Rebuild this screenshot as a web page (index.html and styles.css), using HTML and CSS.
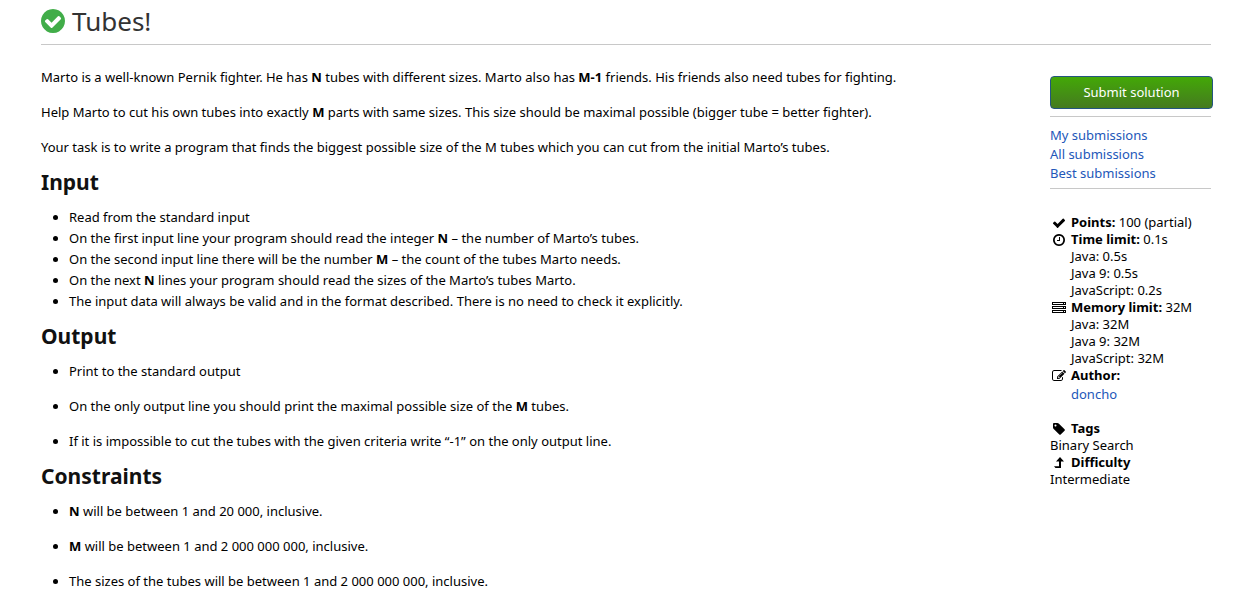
FILE: index.html
```html
<!DOCTYPE html>
<html lang="en">
<head>
<meta charset="utf-8">
<title>Tubes!</title>
<link rel="stylesheet" href="styles.css">
</head>
<body>
<main class="page">
<header class="page-header">
<svg class="status-icon" viewBox="128 128 1536 1536" aria-hidden="true"><path d="M1412 734q0-28-18-46l-91-90q-19-19-45-19t-45 19l-408 407-226-226q-19-19-45-19t-45 19l-91 90q-18 18-18 46 0 27 18 45l362 362q19 19 45 19 27 0 46-19l543-543q18-18 18-45zm252 162q0 209-103 385.5t-279.5 279.5-385.5 103-385.5-103-279.5-279.5-103-385.5 103-385.5 279.5-279.5 385.5-103 385.5 103 279.5 279.5 103 385.5z"/></svg>
<h1 class="page-title">Tubes!</h1>
</header>
<div class="columns">
<article class="problem">
<p>Marto is a well-known Pernik fighter. He has <strong>N</strong> tubes with different sizes. Marto also has <strong>M-1</strong> friends. His friends also need tubes for fighting.</p>
<p>Help Marto to cut his own tubes into exactly <strong>M</strong> parts with same sizes. This size should be maximal possible (bigger tube = better fighter).</p>
<p>Your task is to write a program that finds the biggest possible size of the M tubes which you can cut from the initial Marto’s tubes.</p>
<h2>Input</h2>
<ul>
<li>Read from the standard input</li>
<li>On the first input line your program should read the integer <strong>N</strong> – the number of Marto’s tubes.</li>
<li>On the second input line there will be the number <strong>M</strong> – the count of the tubes Marto needs.</li>
<li>On the next <strong>N</strong> lines your program should read the sizes of the Marto’s tubes Marto.</li>
<li>The input data will always be valid and in the format described. There is no need to check it explicitly.</li>
</ul>
<h2>Output</h2>
<ul class="loose">
<li>Print to the standard output</li>
<li>On the only output line you should print the maximal possible size of the <strong>M</strong> tubes.</li>
<li>If it is impossible to cut the tubes with the given criteria write “-1” on the only output line.</li>
</ul>
<h2>Constraints</h2>
<ul class="loose">
<li><strong>N</strong> will be between 1 and 20 000, inclusive.</li>
<li><strong>M</strong> will be between 1 and 2 000 000 000, inclusive.</li>
<li>The sizes of the tubes will be between 1 and 2 000 000 000, inclusive.</li>
</ul>
</article>
<aside class="sidebar">
<button class="submit" type="button">Submit solution</button>
<nav class="links">
<a href="#my">My submissions</a>
<a href="#all">All submissions</a>
<a href="#best">Best submissions</a>
</nav>
<section class="info">
<div class="row"><svg class="icon" viewBox="0 0 1792 1792" aria-hidden="true"><path d="M1671 566q0 40-28 68l-724 724-136 136q-28 28-68 28t-68-28l-136-136-362-362q-28-28-28-68t28-68l136-136q28-28 68-28t68 28l294 295 656-657q28-28 68-28t68 28l136 136q28 28 28 68z"/></svg><span><strong>Points:</strong> 100 (partial)</span></div>
<div class="row"><svg class="icon" viewBox="0 0 1792 1792" aria-hidden="true"><path d="M1024 544v448q0 14-9 23t-23 9h-320q-14 0-23-9t-9-23v-64q0-14 9-23t23-9h224v-352q0-14 9-23t23-9h64q14 0 23 9t9 23zm416 352q0-148-73-273t-198-198-273-73-273 73-198 198-73 273 73 273 198 198 273 73 273-73 198-198 73-273zm224 0q0 209-103 385.5t-279.5 279.5-385.5 103-385.5-103-279.5-279.5-103-385.5 103-385.5 279.5-279.5 385.5-103 385.5 103 279.5 279.5 103 385.5z"/></svg><span><strong>Time limit:</strong> 0.1s</span></div>
<div class="detail">Java: 0.5s</div>
<div class="detail">Java 9: 0.5s</div>
<div class="detail">JavaScript: 0.2s</div>
<div class="row"><svg class="icon" viewBox="0 0 14 14" aria-hidden="true"><path fill-rule="evenodd" d="M0 1h14v3H0zM1 2v1h10V2zM12 2v1h1V2zM0 5h14v3H0zM1 6v1h10V6zM12 6v1h1V6zM0 9h14v3H0zM1 10v1h10v-1zM12 10v1h1v-1z"/></svg><span><strong>Memory limit:</strong> 32M</span></div>
<div class="detail">Java: 32M</div>
<div class="detail">Java 9: 32M</div>
<div class="detail">JavaScript: 32M</div>
<div class="row"><svg class="icon" viewBox="0 0 1792 1792" aria-hidden="true"><path d="M888 1184l116-116-152-152-116 116v56h96v96h56zm440-720q-16-16-33 1l-350 350q-17 17-1 33t33-1l350-350q17-17 1-33zm80 594v190q0 119-84.5 203.5t-203.5 84.5h-832q-119 0-203.5-84.5t-84.5-203.5v-832q0-119 84.5-203.5t203.5-84.5h832q63 0 117 25 15 7 18 23 3 17-9 29l-49 49q-14 14-32 8-23-6-45-6h-832q-66 0-113 47t-47 113v832q0 66 47 113t113 47h832q66 0 113-47t47-113v-126q0-13 9-22l64-64q15-15 35-7t20 29zm-96-738l288 288-672 672h-288v-288zm444 132l-92 92-288-288 92-92q28-28 68-28t68 28l152 152q28 28 28 68t-28 68z"/></svg><strong>Author:</strong></div>
<div class="detail author"><a href="#doncho">doncho</a></div>
</section>
<section class="info meta">
<div class="row"><svg class="icon" viewBox="0 0 1792 1792" aria-hidden="true"><path d="M576 448q0-53-37.500-90.500t-90.500-37.500-90.500 37.500-37.500 90.500 37.500 90.500 90.500 37.500 90.500-37.500 37.500-90.500zm1067 576q0 53-37 90l-491 492q-39 37-91 37-53 0-90-37l-715-716q-38-37-64.500-101t-26.500-117v-416q0-52 38-90t90-38h416q53 0 117 26.500t102 64.500l715 714q37 39 37 91z"/></svg><strong>Tags</strong></div>
<div>Binary Search</div>
<div class="row"><svg class="icon" viewBox="0 0 14 14" aria-hidden="true"><path d="M8 1l4 4.600H9V12H3.500L2 10.200h5V5.600H4z"/></svg><strong>Difficulty</strong></div>
<div>Intermediate</div>
</section>
</aside>
</div>
</main>
</body>
</html>
```
FILE: styles.css
```css
* { box-sizing: border-box; }
body {
  margin: 0;
  background: #fff;
  color: #000;
  font-family: "Segoe UI", "Noto Sans", sans-serif;
  font-size: 13px;
  line-height: 21px;
}
a { color: #2257b9; text-decoration: none; }
.page { padding: 0 48px 0 41px; }
.page-header {
  display: flex;
  align-items: center;
  gap: 7px;
  height: 45px;
  padding-bottom: 2px;
  border-bottom: 1px solid #c8c8c8;
}
.status-icon { width: 24px; height: 24px; fill: #41ad49; }
.page-title {
  margin: 0;
  color: #333;
  font-size: 26px;
  font-weight: 400;
  line-height: 40px;
}
.columns { display: flex; gap: 32px; padding-top: 22px; }
.problem { flex: 1; }
.problem p { margin: 0 0 14px; }
.problem h2 {
  margin: 10px 0;
  color: #111;
  font-size: 21px;
  font-weight: 700;
  line-height: 29px;
}
.problem p + h2 { margin-top: -4px; }
.problem ul { margin: 0; padding-left: 28px; }
.loose li + li { margin-top: 14px; }
.sidebar { width: 161px; padding-top: 9px; }
.submit {
  display: block;
  width: 163px;
  height: 33px;
  padding: 0;
  border: 1px solid #245580;
  border-radius: 4px;
  background: linear-gradient(#43a807, #457a20);
  color: #fff;
  font: inherit;
}
.links {
  display: flex;
  flex-direction: column;
  margin-top: 7px;
  padding: 9px 0 5px;
  border: solid #c8c8c8;
  border-width: 1px 0;
  line-height: 19px;
}
.info { margin-top: 25px; line-height: 17px; }
.row { display: flex; align-items: center; gap: 5px; }
.icon { width: 14px; height: 14px; margin-left: 2px; }
.detail { padding-left: 21px; }
.author { line-height: 21px; }
.meta { margin-top: 15px; }
```
